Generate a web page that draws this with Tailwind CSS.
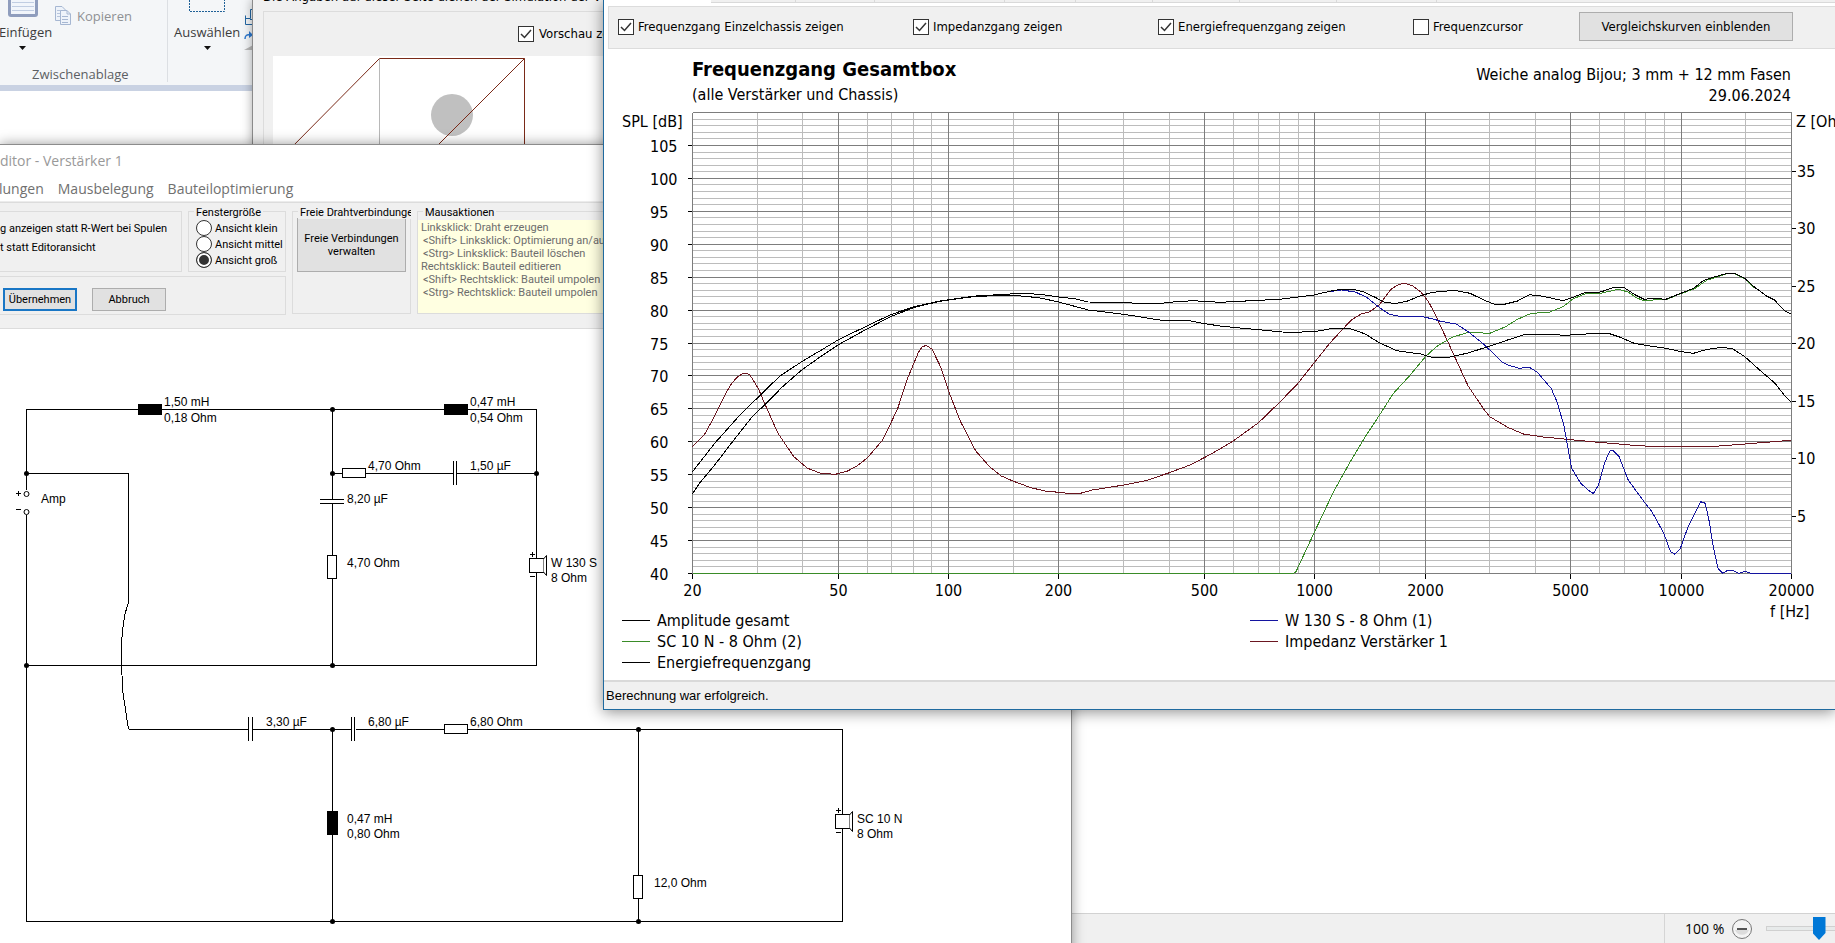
<!DOCTYPE html>
<html lang="de">
<head>
    <meta charset="UTF-8">
    <meta name="viewport" content="width=device-width, initial-scale=1.0">
    <title>Frequenzgang Gesamtbox</title>
    <script src="https://cdn.jsdelivr.net/npm/@tailwindcss/browser@4"></script>
</head>
<body class="relative h-screen overflow-hidden bg-white text-black font-['DejaVu_Sans_Condensed','Noto_Sans',sans-serif]">

    <!-- Background application: ribbon, empty page, status bar -->
    <div class="h-full flex flex-col font-['Open_Sans','Noto_Sans',sans-serif]">
        <div class="h-[91px] flex bg-[#f4f6f8] border-b-6 border-[#c9d2e3] text-[13px] text-[#3c3c3c]">
            <div class="w-[168px] h-[82px] border-r border-[#dcdfe3] flex flex-col justify-between">
                <div class="flex">
                    <button class="-ml-px w-[52px] flex flex-col items-start">
                        <svg class="ml-2 w-[32px] h-[22px]" viewBox="0 0 32 22">
                            <path d="M1 0V14Q1 17 4 17H28Q31 17 31 14V0Z" fill="#8f9dbd"/>
                            <path d="M4 0H28V14H4Z" fill="#f1f5fb"/>
                            <path d="M5 2.500H27M5 6.500H27M5 10.500H27" stroke="#c0cde2"/>
                        </svg>
                        <span class="leading-5">Einfügen</span>
                        <svg class="mt-1 ml-5 w-[7px] h-1" viewBox="0 0 7 4"><path d="M0 0H7L3.500 4Z" fill="#111"/></svg>
                    </button>
                    <button class="flex items-start gap-1 pl-1 pt-1 text-[#8f9194]">
                        <svg class="mt-px w-[18px] h-[21px]" viewBox="0 0 18 21" fill="#eef3fa" stroke="#a6b7d2">
                            <path d="M.5 1.500H7L10.500 5V15.500H.5Z"/>
                            <path d="M2 5.500H6M2 8.500H6M2 11.500H6" stroke="#b7c5dc"/>
                            <path d="M5.500 5.500H12L15.500 9V19.500H5.500Z"/>
                            <path d="M12 5.500V9H15.500M7 11.500H13M7 14.500H13M7 17.500H13" fill="none"/>
                        </svg>
                        <span class="leading-6">Kopieren</span>
                    </button>
                </div>
                <div class="pl-8 leading-4 text-[#5c5f63]">Zwischenablage</div>
            </div>
            <div class="flex gap-2 pl-[6px]">
                <button class="flex flex-col items-center">
                    <svg class="w-[36px] h-[22px]" viewBox="0 0 36 22"><path d="M.5 0V11.500H35.500V0" fill="none" stroke="#1f6097" stroke-dasharray="2 1"/></svg>
                    <span class="leading-5">Auswählen</span>
                    <svg class="mt-1 w-[7px] h-1" viewBox="0 0 7 4"><path d="M0 0H7L3.500 4Z" fill="#111"/></svg>
                </button>
                <svg class="-ml-1 w-[30px] h-[52px]" viewBox="0 0 30 52">
                    <path d="M6.500 9.500H20V19M1.500 15.500V24.500H12V20M1.500 18.500H6.500V9.500M6 19.500H20" fill="none" stroke="#2266a3"/>
                    <path d="M1 39Q1 34 6 35" fill="none" stroke="#2c78cf" stroke-width="1.500"/>
                    <path d="M5 31L9 35L5 38Z" fill="#2c78cf"/>
                    <path d="M0 50L13 43V50Z" fill="#b9b9b9"/>
                </svg>
            </div>
        </div>
        <div class="grow"></div>
        <div class="h-[30px] flex items-center justify-end bg-[#f0f0f0] border-t border-[#d2d2d2] text-[14px]">
            <div class="w-[171px] h-full border-l border-[#d5d5d5] flex items-center overflow-hidden">
                <label for="zoom" class="ml-5 w-[47px] shrink-0">100 %</label>
                <button class="shrink-0 size-5" aria-label="Verkleinern">
                    <svg viewBox="0 0 20 20">
                        <circle cx="10" cy="10" r="9.500" fill="#f4f4f4" stroke="#777"/>
                        <path d="M3 11H17A7.500 7.500 0 0 1 3 11Z" fill="#dcdcdc"/>
                        <path d="M5 10H15" stroke="#555" stroke-width="2"/>
                    </svg>
                </button>
                <input id="zoom" type="range" min="0" max="100" value="50" class="ml-[14px] shrink-0 w-[106px] h-6 appearance-none bg-transparent [&::-webkit-slider-runnable-track]:h-[5px] [&::-webkit-slider-runnable-track]:bg-[#e7eaea] [&::-webkit-slider-runnable-track]:border [&::-webkit-slider-runnable-track]:border-[#d0d0d0] [&::-webkit-slider-thumb]:appearance-none [&::-webkit-slider-thumb]:w-[13px] [&::-webkit-slider-thumb]:h-[23px] [&::-webkit-slider-thumb]:-mt-[10px] [&::-webkit-slider-thumb]:bg-[#0078d7] [&::-webkit-slider-thumb]:[clip-path:polygon(0_0,100%_0,100%_70%,50%_100%,0_70%)]">
            </div>
        </div>
    </div>

    <!-- Enclosure window -->
    <div class="absolute left-[252px] top-0 w-[400px] h-[150px] bg-[#f0f0f0] border-l border-[#8a8a8a] shadow-[0_0_10px_rgba(0,0,0,0.35)] overflow-hidden text-[13px]">
        <div class="h-[11px] pl-[10px] flex items-end whitespace-nowrap"><p class="mb-1 leading-5">Die Angaben auf dieser Seite dienen der Simulation der V</p></div>
        <div class="ml-[10px] border-l border-t border-[#dcdcdc]">
            <div class="h-[44px] pl-[254px] flex items-center gap-[5px]">
                <span class="relative size-4 shrink-0">
                    <input id="preview" type="checkbox" checked class="block size-4 appearance-none border border-[#333] bg-white">
                    <svg class="absolute inset-0" viewBox="0 0 16 16"><path d="M3 8L6.500 11.500L13 4" fill="none" stroke="#333" stroke-width="1.500"/></svg>
                </span>
                <label for="preview">Vorschau zeigen</label>
            </div>
            <svg class="ml-[9px] w-[330px] h-[94px] bg-white" viewBox="273 56 330 94" fill="none" stroke="#7a2a18">
                <circle cx="452" cy="115" r="21" fill="#c0c0c0" stroke="none"/>
                <path d="M379.500 59V150" stroke="#b8b8b8"/>
                <path d="M289 150L379.500 58.500H524.500V150M524.500 58.500L433 150"/>
            </svg>
        </div>
    </div>

    <!-- Crossover editor window -->
    <div class="absolute left-0 top-[144px] w-[1072px] h-[820px] bg-white border-t border-r border-[#8c8c8c] shadow-[0_0_12px_rgba(0,0,0,0.4)] overflow-hidden">
        <h1 class="h-[31px] flex items-center font-['Open_Sans','Noto_Sans',sans-serif] text-[14px] text-[#999]">ditor - Verstärker 1</h1>
        <nav class="-ml-px h-[26px] flex items-center gap-[14px] font-['Open_Sans','Noto_Sans',sans-serif] text-[14px] text-[#707070] border-b border-[#ececec]">
            <a href="#">lungen</a>
            <a href="#">Mausbelegung</a>
            <a href="#">Bauteiloptimierung</a>
        </nav>
        <div class="h-[127px] flex gap-[6px] bg-[#f0f0f0] border-y border-[#dcdcdc] pt-[8px] font-['Roboto','Noto_Sans',sans-serif] text-[11px] leading-[13px]">
            <div class="w-[286px] flex flex-col gap-[4px]">
                <div class="flex gap-[6px]">
                    <div class="w-[182px] h-[61px] border border-l-0 border-[#dcdcdc] flex flex-col gap-[6px] pt-[10px] whitespace-nowrap">
                        <span>g anzeigen statt R-Wert bei Spulen</span>
                        <span>t statt Editoransicht</span>
                    </div>
                    <fieldset class="relative w-[98px] h-[61px] border border-[#dcdcdc] pt-[8px] pl-[7px]">
                        <legend class="absolute -top-[6px] left-[5px] bg-[#f0f0f0] px-[2px]">Fenstergröße</legend>
                        <label class="h-4 flex items-center gap-[3px] whitespace-nowrap"><input type="radio" name="size" class="shrink-0 size-4 appearance-none rounded-full border border-[#333] bg-white">Ansicht klein</label>
                        <label class="h-4 flex items-center gap-[3px] whitespace-nowrap"><input type="radio" name="size" class="shrink-0 size-4 appearance-none rounded-full border border-[#333] bg-white">Ansicht mittel</label>
                        <label class="h-4 flex items-center gap-[3px] whitespace-nowrap"><input type="radio" name="size" checked class="shrink-0 size-4 appearance-none rounded-full border border-[#333] bg-[#333] shadow-[inset_0_0_0_2px_#fff]">Ansicht groß</label>
                    </fieldset>
                </div>
                <div class="h-[39px] border border-l-0 border-[#dcdcdc] pl-[3px] pt-[8px] flex items-center gap-[15px]">
                    <button class="w-[74px] h-[23px] border-2 border-[#1976c5] bg-[#e1e1e1]">Übernehmen</button>
                    <button class="w-[74px] h-[23px] border border-[#adadad] bg-[#e1e1e1]">Abbruch</button>
                </div>
            </div>
            <fieldset class="relative w-[119px] h-[103px] border border-[#dcdcdc] pt-[6px] px-[4px]">
                <legend class="absolute -top-[6px] left-[5px] w-[113px] overflow-hidden whitespace-nowrap bg-[#f0f0f0] pl-[2px]">Freie Drahtverbindungen</legend>
                <button class="w-full h-[54px] border border-[#adadad] bg-[#e1e1e1]">Freie Verbindungen verwalten</button>
            </fieldset>
            <fieldset class="relative grow h-[103px] border border-[#dcdcdc] pt-[8px]">
                <legend class="absolute -top-[6px] left-[5px] bg-[#f0f0f0] px-[2px]">Mausaktionen</legend>
                <div class="h-full bg-[#ffffe1] pl-[3px] pt-px text-[#6d6d6d] whitespace-nowrap">
                    <p>Linksklick: Draht erzeugen</p>
                    <p class="pl-[2px]">&lt;Shift&gt; Linksklick: Optimierung an/aus</p>
                    <p class="pl-[2px]">&lt;Strg&gt; Linksklick: Bauteil löschen</p>
                    <p>Rechtsklick: Bauteil editieren</p>
                    <p class="pl-[2px]">&lt;Shift&gt; Rechtsklick: Bauteil umpolen</p>
                    <p class="pl-[2px]">&lt;Strg&gt; Rechtsklick: Bauteil umpolen</p>
                </div>
            </fieldset>
        </div>

        <!-- Schematic -->
        <svg class="block w-full font-['Liberation_Sans',sans-serif] text-[12px]" viewBox="0 329 1071 614">
            <g fill="none" stroke="#000" shape-rendering="crispEdges">
                <path d="M26.500 490V409.500H536.500V558M536.500 573V665.500H26.500M26.500 515V921.500H842.500V829M842.500 814V729.500H468"/>
                <path d="M26.500 473.500H128.500V602M128.500 729.500H248M253 729.500H351M356 729.500H444M332.500 729.500V921.500M638.500 729.500V921.500"/>
                <path d="M332.500 409.500V499M332.500 504V665.500M332.500 473.500H453M457 473.500H536.500"/>
                <path d="M453.500 461V485M456.500 461V485M320 499.500H344M320 503.500H344M248.500 717V741M252.500 717V741M351.500 717V741M354.500 717V741"/>
                <path d="M16 493.500H21M18.500 491V496M16 509.500H21M530 554.500H535M532.500 552V557M530 576.500H535M836 810.500H841M838.500 808V813M836 832.500H841"/>
                <path d="M128.500 602L125 614L122.500 630L121.500 645V666L123 693L128.500 729.500"/>
            </g>
            <g fill="#fff" stroke="#000">
                <path shape-rendering="crispEdges" d="M342.500 468.500H365.500V477.500H342.500ZM444.500 724.500H467.500V733.500H444.500ZM327.500 555.500H336.500V578.500H327.500ZM633.500 875.500H642.500V898.500H633.500ZM529.500 558.500H543.500V572.500H529.500ZM835.500 814.500H849.500V828.500H835.500Z"/>
                <path d="M543.500 559L546.500 555.500V575.500L543.500 572M849.500 815L852.500 811.500V831.500L849.500 828"/>
                <circle cx="26.500" cy="494" r="2.500"/>
                <circle cx="26.500" cy="512" r="2.500"/>
            </g>
            <path d="M138 404H162V415H138ZM444 404H468V415H444ZM327 811H338V835H327Z"/>
            <g>
                <circle cx="26.500" cy="473.500" r="2.500"/><circle cx="332.500" cy="409.500" r="2.500"/><circle cx="332.500" cy="473.500" r="2.500"/>
                <circle cx="536.500" cy="473.500" r="2.500"/><circle cx="26.500" cy="665.500" r="2.500"/><circle cx="332.500" cy="665.500" r="2.500"/>
                <circle cx="332.500" cy="729.500" r="2.500"/><circle cx="638.500" cy="729.500" r="2.500"/><circle cx="332.500" cy="921.500" r="2.500"/>
                <circle cx="638.500" cy="921.500" r="2.500"/>
            </g>
            <text x="164" y="406">1,50 mH</text><text x="164" y="422">0,18 Ohm</text>
            <text x="470" y="406">0,47 mH</text><text x="470" y="422">0,54 Ohm</text>
            <text x="368" y="470">4,70 Ohm</text><text x="470" y="470">1,50 µF</text>
            <text x="41" y="503">Amp</text><text x="347" y="503">8,20 µF</text>
            <text x="347" y="567">4,70 Ohm</text>
            <text x="551" y="567">W 130 S</text><text x="551" y="582">8 Ohm</text>
            <text x="266" y="726">3,30 µF</text><text x="368" y="726">6,80 µF</text><text x="470" y="726">6,80 Ohm</text>
            <text x="347" y="823">0,47 mH</text><text x="347" y="838">0,80 Ohm</text>
            <text x="654" y="887">12,0 Ohm</text>
            <text x="857" y="823">SC 10 N</text><text x="857" y="838">8 Ohm</text>
        </svg>
    </div>

    <!-- Frequency response window -->
    <div class="absolute left-[603px] right-0 top-0 bg-white border-l border-b border-[#1f6a9f] shadow-[0_2px_14px_rgba(0,0,0,0.45)] overflow-hidden">
        <div class="h-[3px] ml-[107px] flex bg-[#f0f0f0] border-b border-[#d9d9d9]">
            <i class="w-[85px] border-r border-[#d9d9d9]"></i>
            <i class="w-[79px] border-r border-[#d9d9d9]"></i>
            <i class="w-[130px] border-r border-[#d9d9d9]"></i>
            <i class="w-[71px] border-r border-[#d9d9d9]"></i>
            <i class="w-[77px] border-r border-[#d9d9d9]"></i>
            <i class="w-[87px] border-r border-[#d9d9d9]"></i>
            <i class="w-[97px] border-r border-[#d9d9d9]"></i>
            <i class="w-[100px] border-r border-[#d9d9d9]"></i>
        </div>
        <div class="mt-[3px] ml-[4px] h-[43px] flex items-center bg-[#f0f0f0] border border-r-0 border-[#dcdcdc] pl-[9px] pb-[2px] text-[13px] whitespace-nowrap">
            <div class="w-[295px] flex items-center gap-[4px]">
                <span class="relative size-4">
                    <input id="single" type="checkbox" checked class="block size-4 appearance-none border border-[#333] bg-white">
                    <svg class="absolute inset-0" viewBox="0 0 16 16"><path d="M3 8L6.500 11.500L13 4" fill="none" stroke="#333" stroke-width="1.500"/></svg>
                </span>
                <label for="single">Frequenzgang Einzelchassis zeigen</label>
            </div>
            <div class="w-[245px] flex items-center gap-[4px]">
                <span class="relative size-4">
                    <input id="impedance" type="checkbox" checked class="block size-4 appearance-none border border-[#333] bg-white">
                    <svg class="absolute inset-0" viewBox="0 0 16 16"><path d="M3 8L6.500 11.500L13 4" fill="none" stroke="#333" stroke-width="1.500"/></svg>
                </span>
                <label for="impedance">Impedanzgang zeigen</label>
            </div>
            <div class="w-[255px] flex items-center gap-[4px]">
                <span class="relative size-4">
                    <input id="energy" type="checkbox" checked class="block size-4 appearance-none border border-[#333] bg-white">
                    <svg class="absolute inset-0" viewBox="0 0 16 16"><path d="M3 8L6.500 11.500L13 4" fill="none" stroke="#333" stroke-width="1.500"/></svg>
                </span>
                <label for="energy">Energiefrequenzgang zeigen</label>
            </div>
            <div class="w-[166px] flex items-center gap-[4px]">
                <input id="cursor" type="checkbox" class="block size-4 appearance-none border border-[#333] bg-white">
                <label for="cursor">Frequenzcursor</label>
            </div>
            <button class="w-[214px] h-[29px] border border-[#adadad] bg-[#e1e1e1]">Vergleichskurven einblenden</button>
        </div>
        <div class="flex justify-between pt-[7px] pl-[88px] pr-[44px] text-[16px]">
            <div>
                <h2 class="text-[20px] leading-[26px] font-bold">Frequenzgang Gesamtbox</h2>
                <p class="leading-[25px]">(alle Verstärker und Chassis)</p>
            </div>
            <div class="pt-[7px] text-right">
                <p class="leading-[23px]">Weiche analog Bijou; 3 mm + 12 mm Fasen</p>
                <p class="leading-[20px]">29.06.2024</p>
            </div>
        </div>

        <svg class="block w-full text-[16px]" viewBox="604 107 1231 513">
            <g id="grid" shape-rendering="crispEdges"></g>
            <g id="labels"></g>
            <text x="622" y="127">SPL [dB]</text>
            <text x="1796" y="127">Z [Ohm]</text>
            <text x="1770" y="617">f [Hz]</text>
            <g fill="none" stroke-linejoin="round" shape-rendering="crispEdges">
                <!-- Impedance -->
                <polyline stroke="#6b1620" points="692.5,446.7 704.8,434 714.7,416 725.7,393.3 732,383 737.6,376.7 743.5,373.3 749.5,374.3 758.2,388.3 765.3,405 778,433.3 793.8,456.7 807.6,468.3 820.6,473.3 835.3,474.3 847.1,471.3 857,466 866.9,458.3 882.7,440 897.4,409.3 907.6,378.3 918.3,352.7 922,347 926.2,345.3 932.1,349.3 940.8,367.3 948.8,391.7 960.6,421.7 975.6,450.7 989.5,466.7 1001.3,476 1013.6,481.3 1031,487.7 1044.8,491 1058.7,492.3 1068.6,493.5 1080.4,493.3 1092.3,490 1123.9,485 1145.7,480.7 1169.4,472.7 1189.2,465.3 1205,457.3 1220,449 1233.6,440.7 1258.5,422.7 1280.2,401.7 1298,383.3 1314.6,362.3 1329.7,343.3 1343.5,328.3 1352.2,319.3 1361.3,314 1369.2,312 1379.1,305 1391,289.3 1398.9,284.3 1404.8,283.3 1412.7,286 1420.6,291.7 1428.5,301.7 1434.5,313 1446.3,338.3 1456.2,360 1468.1,386 1483.9,409.3 1489.8,416.7 1507.6,427.3 1523.4,434 1543.2,437 1570.9,439.7 1598.5,442.3 1630.2,445 1650,446.3 1681.6,446.7 1715.2,446.3 1744.8,444 1791,440.3"/>
                <!-- SC 10 N -->
                <polyline stroke="#3a8c28" points="692.5,573.5 1293.3,573.5 1296,571.7 1314.6,531.7 1333.6,491.7 1349.4,463.3 1365.3,436.7 1379.1,415.7 1392.9,394 1408.7,376.7 1425.4,356.7 1436.4,346.7 1452.2,337.3 1468.1,332.3 1489.8,333.3 1505.6,326.7 1517.5,319.3 1531.3,313.3 1549.1,312.3 1563,306.7 1572.9,299 1584.7,294 1600.5,293.3 1618.3,289.3 1628.2,292 1636.1,297.7 1644.8,301 1655.9,299.7 1665.8,299.7 1681.6,293.3 1693.5,289.3 1707.3,280 1727.1,273.8 1735,274 1744.8,279 1754.7,288"/>
                <!-- W 130 S -->
                <polyline stroke="#1414a0" points="1329.7,291.6 1341.5,290 1355.4,292 1367.2,297.7 1379.1,307.3 1389,314 1398.9,316.3 1420.6,316.3 1434.5,319.3 1440.4,321.3 1456.2,324 1468.1,331.7 1483.9,344.3 1501.7,361.7 1509,365.500 1519.5,368.3 1529.4,367.3 1537.3,372.3 1551.1,388.3 1557,401.7 1563.8,425 1571.7,468.3 1580.8,483.3 1588,490 1593.4,493.7 1598.5,485 1604.5,463.3 1609.6,451.3 1612.4,450 1619.1,456.7 1628.2,480 1644,501.7 1651.9,511.7 1663.8,533.3 1670.5,551.7 1674.9,554.3 1680.4,548.3 1687.5,528.3 1700.6,501.7 1705.3,503.3 1709.3,521.7 1713.2,546.7 1718,568.3 1722.7,573.3 1727,570.7 1733,570.7 1738.9,573.3 1745.6,571.3 1750.8,573.5 1791,573.5"/>
                <!-- Overall amplitude -->
                <polyline stroke="#000" points="692.5,471.7 714.7,443.3 738.4,416.7 762.1,393.3 779.9,376 801.7,361.7 821.4,350 839.2,339.3 866.9,326 890.6,314.7 914.3,306.7 940,301 975.6,296 1013.2,293.8 1025,293.3 1042.9,294.7 1058.7,297 1074.5,298.7 1088.3,302 1118,302.3 1137.8,303.3 1161.5,303.3 1173.3,302 1193.1,300.7 1220,302.3 1232.8,301.7 1258.5,300.3 1280.2,299.3 1298,297 1313.9,295 1329.7,291.3 1341.5,289.3 1351.4,289 1363.3,291.7 1375.1,297.3 1385,302.7 1396.9,303.3 1406.8,301.3 1420.6,295.7 1432.5,292.3 1454.2,290.3 1470,293.3 1483.9,300 1493.8,304 1505.6,304 1517.5,301 1529.4,294.7 1543.2,296.3 1563,300.7 1572.9,297.3 1584.7,292.7 1600.5,292 1614.4,287.3 1624.3,287.7 1634.1,294.3 1644,299.3 1653.9,298.3 1665.8,299.3 1681.6,293 1693.5,288.3 1703.3,280.7 1713.2,277.3 1727.1,273.3 1735,273.7 1744.8,278.3 1754.7,287.3 1766.6,296 1774.5,300 1784.4,310.7 1791,314"/>
                <!-- Energy response -->
                <polyline stroke="#000" points="692.5,494 698.9,484 714.7,465 732.5,441.7 752.2,416.7 768,401.7 781.9,387.3 801.7,370 821.4,356 839.2,344.3 866.9,329 890.6,316.7 914.3,307.3 940,301.300 975.6,296.300 1013.2,295.3 1038.9,297.7 1058.7,302 1088.3,310 1123.9,314.3 1161.5,320.3 1189.2,320.7 1205,323.7 1220,326 1232.8,327.3 1254.5,329.3 1282.2,332 1298,332.3 1317.8,331 1333.6,328.3 1349.4,328.3 1365.3,334 1379.1,342.7 1396.9,350.7 1420.6,354 1430.5,357 1448.3,357.3 1468.1,353 1487.8,346.7 1507.6,340 1523.4,335 1543.2,334 1564.9,335.3 1590.6,333.7 1608.4,333.3 1620.3,337.3 1634.1,343.3 1650,346 1665.8,348.3 1681.6,351.7 1693.5,353.3 1707.3,349.3 1723.1,347.3 1733,349 1744.8,356.7 1762.6,372.7 1774.5,382.7 1784.4,395.3 1791,401.7"/>
            </g>
        </svg>

        <!-- Legend -->
        <div class="-mt-[10px] pl-[18px] grid grid-cols-[628px_1fr] text-[16px] leading-[21px]">
            <div class="flex items-center gap-[7px]"><i class="w-[28px] border-t border-black"></i>Amplitude gesamt</div>
            <div class="flex items-center gap-[7px]"><i class="w-[28px] border-t border-[#1414a0]"></i>W 130 S - 8 Ohm (1)</div>
            <div class="flex items-center gap-[7px]"><i class="w-[28px] border-t border-[#3a8c28]"></i>SC 10 N - 8 Ohm (2)</div>
            <div class="flex items-center gap-[7px]"><i class="w-[28px] border-t border-[#6b1620]"></i>Impedanz Verstärker 1</div>
            <div class="flex items-center gap-[7px]"><i class="w-[28px] border-t border-black"></i>Energiefrequenzgang</div>
        </div>
        <div class="mt-[7px] h-[29px] flex items-center bg-[#f0f0f0] border-t-2 border-[#d9d9d9] pl-[2px] font-['Liberation_Sans',sans-serif] text-[13px]">Berechnung war erfolgreich.</div>
    </div>

    <script>
        const NS = 'http://www.w3.org/2000/svg';
        const grid = document.getElementById('grid');
        const labels = document.getElementById('labels');
        const x0 = 692.5, x1 = 1791.5, y0 = 112.5, y1 = 573.5;

        const fx = f => Math.floor(x0 + (x1 - x0) * Math.log10(f / 20) / 3) + 0.5;
        const fy = db => Math.floor(y1 - (y1 - y0) * (db - 40) / 70) + 0.5;

        function line(xa, ya, xb, yb, color) {
            const el = document.createElementNS(NS, 'path');
            el.setAttribute('d', `M${xa} ${ya}L${xb} ${yb}`);
            el.setAttribute('stroke', color);
            grid.appendChild(el);
        }

        function label(x, y, text, anchor) {
            const el = document.createElementNS(NS, 'text');
            el.setAttribute('x', x);
            el.setAttribute('y', y);
            el.setAttribute('text-anchor', anchor);
            el.textContent = text;
            labels.appendChild(el);
        }

        // minor lines
        for (let db = 41; db < 110; db++) line(x0, fy(db), x1, fy(db), '#bcbcbc');
        for (const f of [30, 40, 60, 70, 80, 90, 150, 300, 400, 600, 700, 800, 900, 1500, 3000, 4000, 6000, 7000, 8000, 9000, 15000]) {
            line(fx(f), y0, fx(f), y1, '#bcbcbc');
        }
        // major lines with ticks
        for (let db = 40; db <= 110; db += 5) {
            line(x0, fy(db), x1, fy(db), '#7d7d7d');
            if (db < 110) {
                line(x0 - 5, fy(db), x0, fy(db), '#000');
                label(650, fy(db) + 6, db, 'start');
            }
        }
        for (const f of [20, 50, 100, 200, 500, 1000, 2000, 5000, 10000, 20000]) {
            line(fx(f), y0, fx(f), y1, '#7d7d7d');
            line(fx(f), y1, fx(f), y1 + 5, '#000');
            label(fx(f), 596, f, 'middle');
        }
        // impedance scale
        for (let z = 5; z <= 35; z += 5) {
            const y = Math.floor(y1 - z * 11.5) + 0.5;
            line(x1, y, x1 + 4, y, '#000');
            label(1797, y + 5, z, 'start');
        }
    </script>
</body>
</html>
